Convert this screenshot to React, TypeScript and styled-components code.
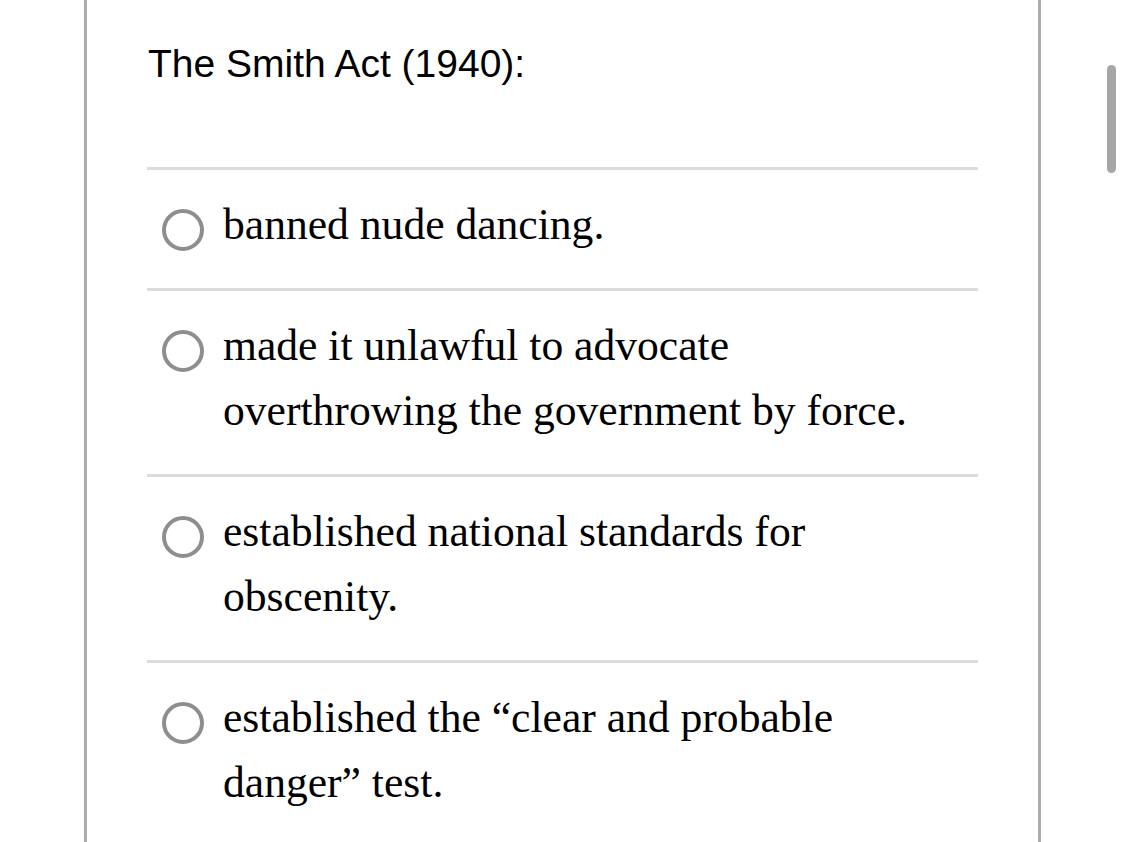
import React from "react";
import styled, { createGlobalStyle } from "styled-components";

const GlobalStyle = createGlobalStyle`
  html, body {
    margin: 0;
    padding: 0;
    background: #ffffff;
  }
  body {
    overflow: hidden;
  }
`;

const Page = styled.div`
  position: relative;
  width: 1125px;
  height: 842px;
  overflow: hidden;
  background: #ffffff;
`;

const Frame = styled.div`
  box-sizing: border-box;
  margin-left: 84px;
  width: 957px;
  min-height: 842px;
  border-left: 3px solid #ababab;
  border-right: 3px solid #ababab;
  padding: 42px 60px 0 60px;
`;

const Question = styled.div`
  font-family: "Liberation Sans", Arial, sans-serif;
  font-size: 39px;
  line-height: normal;
  color: #000;
  margin: 0 0 81px 1px;
`;

const OptionList = styled.div`
  display: flex;
  flex-direction: column;
`;

const OptionRow = styled.label`
  display: flex;
  align-items: flex-start;
  border-top: 3px solid #dcdcdc;
  padding: 22px 0 31px 15px;
  gap: 19px;
  cursor: pointer;
`;

const Radio = styled.span`
  flex: 0 0 auto;
  box-sizing: border-box;
  width: 42px;
  height: 42px;
  margin-top: 17px;
  border-radius: 50%;
  border: 4px solid #8e8e8e;
  background: #fff;
`;

const OptionText = styled.span`
  font-family: "Liberation Serif", "Times New Roman", serif;
  font-size: 43.6px;
  line-height: 65px;
  color: #000;
  max-width: 700px;
`;

const ScrollThumb = styled.div`
  position: absolute;
  left: 1107px;
  top: 65px;
  width: 9px;
  height: 108px;
  border-radius: 5px;
  background: #a6a6a6;
`;

const options: string[][] = [
  ["banned nude dancing."],
  ["made it unlawful to advocate", "overthrowing the government by force."],
  ["established national standards for", "obscenity."],
  ["established the \u201Cclear and probable", "danger\u201D test."],
];

export default function App() {
  return (
    <Page>
      <GlobalStyle />
      <Frame>
        <Question>The Smith Act (1940):</Question>
        <OptionList>
          {options.map((lines, i) => (
            <OptionRow key={i}>
              <Radio />
              <OptionText>
                {lines.map((l, j) => (
                  <React.Fragment key={j}>
                    {j > 0 && <br />}
                    {l}
                  </React.Fragment>
                ))}
              </OptionText>
            </OptionRow>
          ))}
        </OptionList>
      </Frame>
      <ScrollThumb />
    </Page>
  );
}
